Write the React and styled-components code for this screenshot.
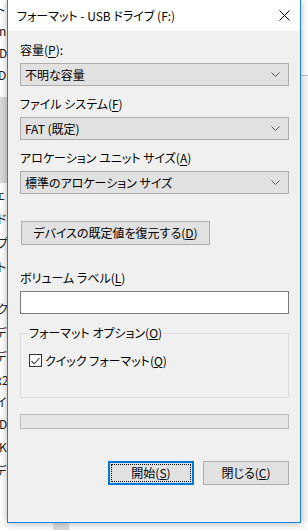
import React from "react";
import styled, { createGlobalStyle } from "styled-components";

const GlobalStyle = createGlobalStyle`
  html, body {
    margin: 0;
    padding: 0;
    background: #ffffff;
  }
  body {
    font-family: "Noto Sans CJK JP", "Noto Sans", sans-serif;
    font-size: 12px;
    color: #000;
    font-feature-settings: "palt";
  }
`;

const Desktop = styled.div`
  width: 308px;
  height: 530px;
  overflow: hidden;
  display: grid;
  grid-template-columns: 7px 294px 7px;
  grid-template-rows: 523px 7px;
  background: #ffffff;
`;

const BackStrip = styled.div`
  overflow: hidden;
  display: flex;
  flex-direction: column;
  background: #ffffff;
  grid-row: 1 / span 2;
`;

const Fragment = styled.div`
  height: ${({ $h }) => $h}px;
  line-height: ${({ $h }) => $h}px;
  font-size: 12px;
  white-space: nowrap;
  color: #222;
  background: ${({ $selected }) => ($selected ? "#d9d9d9" : "transparent")};
  margin-left: ${({ $shift }) => $shift || 0}px;
`;

const RightStrip = styled.div`
  display: flex;
  flex-direction: column;
  background: #f7f7f7;
`;

const RightTop = styled.div`
  height: 75px;
  background: #ffffff;
  border-bottom: 1px solid #b9c3cc;
`;

const BottomStrip = styled.div`
  grid-column: 2 / span 2;
  display: flex;
  background: #fafafa;
`;

const BottomBlock = styled.div`
  width: 16px;
  margin-left: 46px;
  background: #d9d9d9;
`;

const Dialog = styled.div`
  position: relative;
  z-index: 1;
  display: flex;
  flex-direction: column;
  background: #f0f0f0;
  border: 1px solid #1883d7;
  border-top: none;
  box-shadow: 0 0 7px rgba(0, 0, 0, 0.3);
`;

const TitleBar = styled.div`
  height: 31px;
  background: #ffffff;
  display: flex;
  align-items: center;
  justify-content: space-between;
  padding: 0 10px 0 9px;
`;

const Title = styled.span`
  font-size: 12px;
  line-height: 16px;
`;

const CloseIcon = styled.svg`
  width: 11px;
  height: 11px;
  margin-top: -1px;
`;

const Body = styled.div`
  flex: 1;
  display: flex;
  flex-direction: column;
  padding: 11px 11px 0 12px;
`;

const Field = styled.div`
  display: flex;
  flex-direction: column;
  gap: 5px;
  margin-top: ${({ $mt }) => $mt || 0}px;
`;

const Label = styled.div`
  height: 16px;
  line-height: 16px;
  u {
    text-underline-offset: 2px;
  }
`;

const Select = styled.div`
  height: 21px;
  border: 1px solid #adadad;
  background: #e1e1e1;
  display: flex;
  align-items: center;
  justify-content: space-between;
  padding: 0 8px 0 4px;
  line-height: 16px;
`;

const Chevron = styled.svg`
  width: 9px;
  height: 5px;
`;

const PushButton = styled.div`
  width: ${({ $w }) => $w}px;
  height: ${({ $default }) => ($default ? 20 : 22)}px;
  box-sizing: content-box;
  border: ${({ $default }) =>
    $default ? "2px solid #0078d7" : "1px solid #adadad"};
  background: #e1e1e1;
  display: flex;
  align-items: center;
  justify-content: center;
  line-height: 16px;
  outline: ${({ $default }) => ($default ? "1px dotted #000" : "none")};
  outline-offset: -4px;
  margin-top: ${({ $mt }) => $mt || 0}px;
  margin-left: ${({ $ml }) => $ml || 0}px;
`;

const TextInput = styled.div`
  height: 21px;
  border: 1px solid #7a7a7a;
  background: #ffffff;
`;

const GroupBox = styled.fieldset`
  margin: 11px 0 0 0;
  padding: 12px 7px 29px 7px;
  border: 1px solid #dcdcdc;
  min-width: 0;
`;

const Legend = styled.legend`
  padding: 0 1px;
  height: 16px;
  line-height: 16px;
`;

const CheckRow = styled.div`
  display: flex;
  align-items: center;
  gap: 3px;
  height: 15px;
  padding-left: 1px;
`;

const CheckBox = styled.div`
  width: 11px;
  height: 11px;
  border: 1px solid #333333;
  background: #ffffff;
  display: flex;
  align-items: center;
  justify-content: center;
`;

const Progress = styled.div`
  height: 13px;
  margin-top: 16px;
  border: 1px solid #bcbcbc;
  background: #e6e6e6;
`;

const ButtonRow = styled.div`
  display: flex;
  justify-content: flex-end;
  gap: 9px;
  margin-top: 32px;
`;

const fragments = [
  { t: "ト", h: 20, s: -4 },
  { t: "nE", h: 22, s: -1 },
  { t: "D", h: 22, s: -1 },
  { t: "Dr", h: 22, s: -2 },
  { t: "", h: 11 },
  { t: "", h: 86, sel: true },
  { t: "ェ", h: 24, s: -5 },
  { t: "ド", h: 24, s: -3 },
  { t: "プ", h: 24, s: -3 },
  { t: "ト", h: 24, s: -3 },
  { t: "", h: 18 },
  { t: "ク", h: 24, s: -3 },
  { t: "デ", h: 24, s: -5 },
  { t: "デ", h: 24, s: -5 },
  { t: "x2", h: 22, s: -4 },
  { t: "イ", h: 22, s: -4 },
  { t: "D", h: 22, s: -1 },
  { t: "K", h: 24, s: -1 },
  { t: "デ", h: 24, s: -5 },
];

const ChevronDown = () => (
  <Chevron viewBox="0 0 9 5">
    <path d="M0.5 0.5 L4.5 4.5 L8.5 0.5" fill="none" stroke="#555" strokeWidth="1" />
  </Chevron>
);

const App = () => (
  <>
    <GlobalStyle />
    <Desktop>
      <BackStrip>
        {fragments.map((f, i) => (
          <Fragment key={i} $h={f.h} $shift={f.s} $selected={f.sel}>
            {f.t}
          </Fragment>
        ))}
      </BackStrip>
      <Dialog>
        <TitleBar>
          <Title>フォーマット - USB ドライブ (F:)</Title>
          <CloseIcon viewBox="0 0 11 11">
            <path d="M0.5 0.5 L10.5 10.5 M10.5 0.5 L0.5 10.5" stroke="#000" strokeWidth="1" />
          </CloseIcon>
        </TitleBar>
        <Body>
          <Field>
            <Label>
              容量(<u>P</u>):
            </Label>
            <Select>
              <span>不明な容量</span>
              <ChevronDown />
            </Select>
          </Field>
          <Field $mt={10}>
            <Label>
              ファイル システム(<u>F</u>)
            </Label>
            <Select>
              <span>FAT (既定)</span>
              <ChevronDown />
            </Select>
          </Field>
          <Field $mt={10}>
            <Label>
              アロケーション ユニット サイズ(<u>A</u>)
            </Label>
            <Select>
              <span>標準のアロケーション サイズ</span>
              <ChevronDown />
            </Select>
          </Field>
          <PushButton $w={187} $mt={27} $ml={1}>
            デバイスの既定値を復元する(<u>D</u>)
          </PushButton>
          <Field $mt={25}>
            <Label>
              ボリューム ラベル(<u>L</u>)
            </Label>
            <TextInput />
          </Field>
          <GroupBox>
            <Legend>
              フォーマット オプション(<u>O</u>)
            </Legend>
            <CheckRow>
              <CheckBox>
                <svg width="9" height="8" viewBox="0 0 9 8">
                  <path d="M0.5 4 L3.3 6.8 L8.5 1" fill="none" stroke="#333" strokeWidth="1.1" />
                </svg>
              </CheckBox>
              <span>
                クイック フォーマット(<u>Q</u>)
              </span>
            </CheckRow>
          </GroupBox>
          <Progress />
          <ButtonRow>
            <PushButton $w={82} $default>
              開始(<u>S</u>)
            </PushButton>
            <PushButton $w={84}>
              閉じる(<u>C</u>)
            </PushButton>
          </ButtonRow>
        </Body>
      </Dialog>
      <RightStrip>
        <RightTop />
      </RightStrip>
      <BottomStrip>
        <BottomBlock />
      </BottomStrip>
    </Desktop>
  </>
);

export default App;
